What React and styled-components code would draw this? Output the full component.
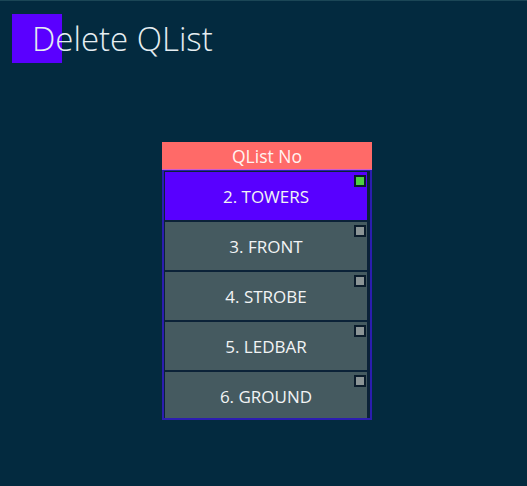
import React from 'react';
import styled, { createGlobalStyle } from 'styled-components';

const GlobalStyle = createGlobalStyle`
  html, body {
    margin: 0;
    padding: 0;
    background: #032a3f;
  }
  * { box-sizing: border-box; }
`;

const Page = styled.div`
  width: 527px;
  height: 486px;
  background: #032a3f;
  border-top: 1px solid #1b4656;
  font-family: "Open Sans", "Noto Sans", sans-serif;
  overflow: hidden;
`;

const Title = styled.h1`
  position: relative;
  margin: 13px 0 0 32px;
  height: 50px;
  font-weight: 300;
  font-size: 33px;
  line-height: 50px;
  color: #e6eef2;
  &::before {
    content: '';
    position: absolute;
    left: -20px;
    top: 0;
    width: 50px;
    height: 49px;
    background: #5a00ff;
    z-index: 0;
  }
  span {
    position: relative;
    z-index: 1;
  }
`;

const Panel = styled.div`
  width: 210px;
  margin: 78px 0 0 162px;
`;

const Header = styled.div`
  height: 28px;
  background: #ff6a68;
  color: #fff4f2;
  font-size: 17.5px;
  line-height: 28px;
  text-align: center;
  border-bottom: 1px solid #d05ad0;
`;

const List = styled.div`
  height: 250px;
  border: 2px solid #2c1db0;
  border-top-width: 1px;
  padding: 1px 3px 0 1px;
  background: #0b2238;
  display: flex;
  flex-direction: column;
  gap: 2px;
  overflow: hidden;
`;

const Item = styled.div`
  position: relative;
  flex: none;
  height: 48px;
  background: ${p => (p.$active ? '#5800ff' : '#455a60')};
  color: #f2f4f5;
  font-size: 17px;
  display: flex;
  align-items: center;
  justify-content: center;
`;

const Check = styled.span`
  position: absolute;
  top: 3px;
  right: 1px;
  width: 12px;
  height: 12px;
  border: 2px solid #0b1c2c;
  background: ${p => (p.$on ? '#4fd040' : '#8b9496')};
`;

const items = [
  { label: '2. TOWERS', active: true },
  { label: '3. FRONT' },
  { label: '4. STROBE' },
  { label: '5. LEDBAR' },
  { label: '6. GROUND' },
];

export default function App() {
  return (
    <Page>
      <GlobalStyle />
      <Title><span>Delete QList</span></Title>
      <Panel>
        <Header>QList No</Header>
        <List>
          {items.map(it => (
            <Item key={it.label} $active={it.active}>
              {it.label}
              <Check $on={it.active} />
            </Item>
          ))}
        </List>
      </Panel>
    </Page>
  );
}
